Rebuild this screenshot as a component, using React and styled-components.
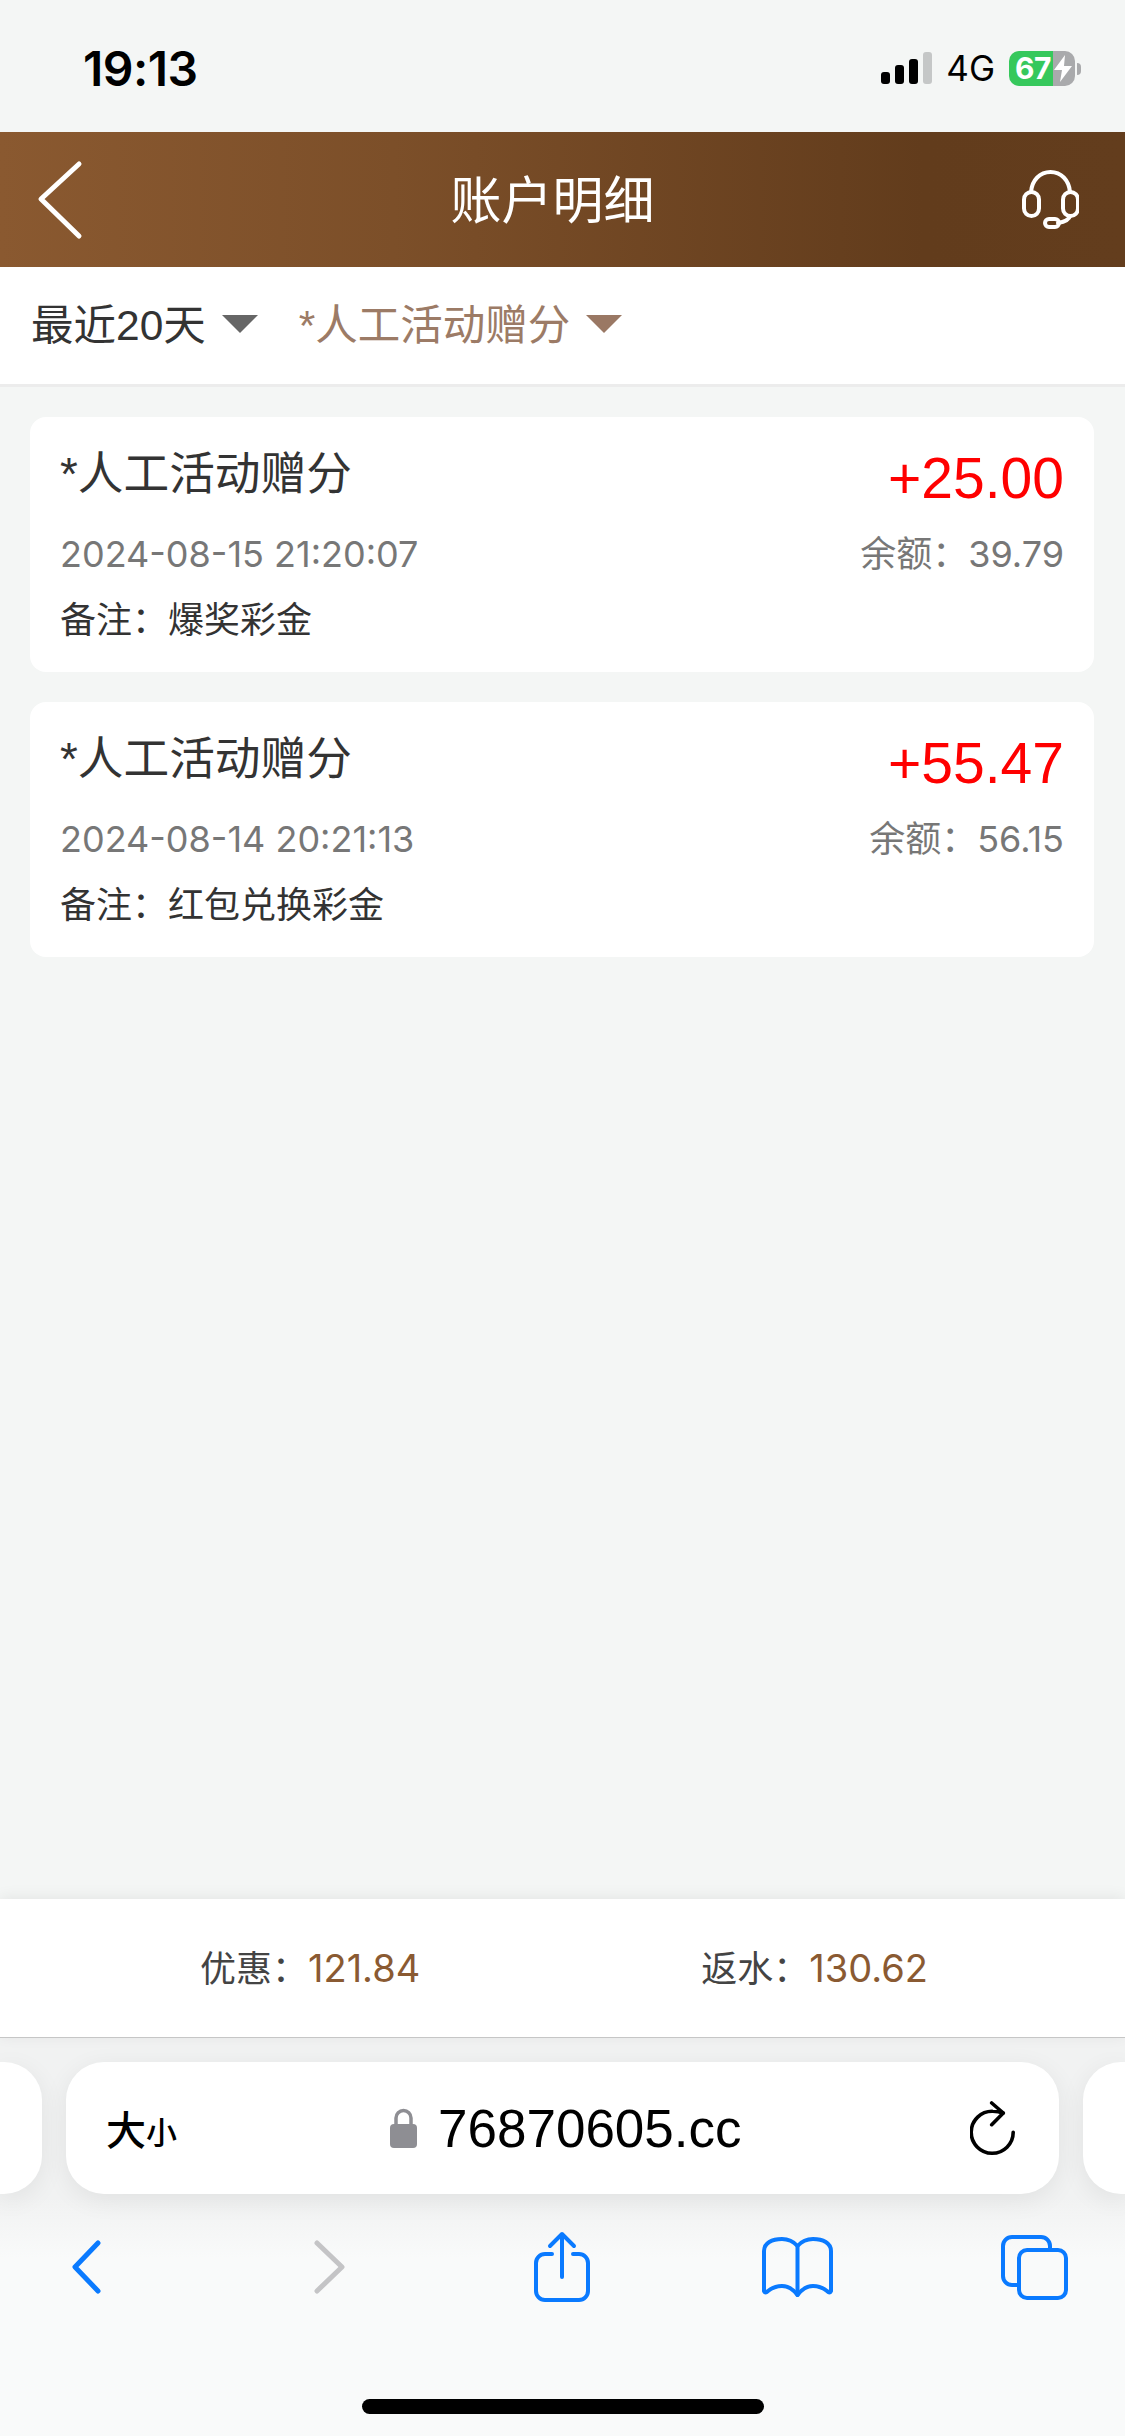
import React from 'react'
import styled, { createGlobalStyle } from 'styled-components'

const cjk = '"Noto Sans CJK SC", sans-serif'

const GlobalStyle = createGlobalStyle`
  html, body {
    margin: 0;
    padding: 0;
    background: #f4f6f5;
  }
  * { box-sizing: border-box; }
`

const Page = styled.div`
  width: 1125px;
  height: 2436px;
  display: flex;
  flex-direction: column;
  overflow: hidden;
  background: #f4f6f5;
  font-family: "Liberation Sans", ${cjk};
`

/* status bar */
const StatusBar = styled.div`
  height: 132px;
  flex: none;
  display: flex;
  align-items: center;
  justify-content: space-between;
  padding: 4px 50px 0 83px;
`
const Clock = styled.div`
  font-family: Inter, sans-serif;
  font-size: 48px;
  font-weight: 600;
  letter-spacing: -0.5px;
  color: #000;
`
const StatusRight = styled.div`
  display: flex;
  align-items: center;
`
const Network = styled.div`
  font-family: Inter, sans-serif;
  font-size: 35px;
  font-weight: 400;
  color: #000;
  margin: 0 14px 0 14px;
`
const Battery = styled.div`
  position: relative;
  width: 66px;
  height: 35px;
  border-radius: 10px;
  background: linear-gradient(90deg, #36c85c 0, #36c85c 44px, #a9aaac 44px, #a9aaac 100%);
  display: flex;
  align-items: center;
  padding-left: 6px;
  color: #fff;
  font-family: Inter, sans-serif;
  font-weight: 700;
  font-size: 30px;
  letter-spacing: -0.5px;
  &::after {
    content: '';
    position: absolute;
    left: 68px;
    top: 12px;
    width: 4px;
    height: 12px;
    border-radius: 0 4px 4px 0;
    background: #a9aaac;
  }
`
const Bolt = styled.svg`
  position: absolute;
  left: 44px;
  top: 4px;
`

/* header */
const Header = styled.header`
  height: 135px;
  flex: none;
  display: flex;
  align-items: center;
  justify-content: space-between;
  padding: 0 46px 0 37px;
  background: linear-gradient(90deg, #8a5930 0%, #7c4f29 35%, #623c1c 82%, #633d1d 100%);
`
const Title = styled.h1`
  margin: 0 0 6px 0;
  font-size: 51px;
  font-weight: 400;
  color: #fff;
  font-family: ${cjk};
`

/* filter bar */
const FilterBar = styled.div`
  height: 120px;
  flex: none;
  display: flex;
  align-items: center;
  padding: 0 0 8px 31px;
  gap: 41px;
  background: #fff;
  border-bottom: 3px solid #ececec;
`
const Filter = styled.div`
  display: flex;
  align-items: center;
  gap: 16px;
  font-size: 42.5px;
  color: ${p => p.$color};
`
const Caret = styled.span`
  width: 0;
  height: 0;
  margin-top: 5px;
  border-left: 18px solid transparent;
  border-right: 18px solid transparent;
  border-top: 18px solid ${p => p.$color};
`

/* records */
const List = styled.main`
  flex: 1;
  display: flex;
  flex-direction: column;
  gap: 30px;
  padding: 30px 31px 0 30px;
`
const Card = styled.article`
  height: 255px;
  flex: none;
  padding: 30px 30px 0 30px;
  background: #fff;
  border-radius: 16px;
`
const Row = styled.div`
  display: flex;
  justify-content: space-between;
  align-items: flex-start;
  margin-top: ${p => p.$top || 0}px;
`
const ItemTitle = styled.div`
  font-size: 45.700px;
  line-height: 56px;
  color: #333;
`
const Amount = styled.div`
  font-size: 57px;
  line-height: 62px;
  color: #ff0000;
`
const Meta = styled.div`
  font-family: Inter, ${cjk};
  font-size: 36px;
  line-height: 50px;
  color: #777;
`
const Note = styled.div`
  font-size: 36px;
  line-height: 52px;
  color: #333;
`

/* summary */
const Summary = styled.div`
  height: 139px;
  flex: none;
  display: flex;
  align-items: center;
  justify-content: center;
  gap: 281px;
  padding: 0 0 4px 3px;
  background: #fff;
  border-bottom: 1px solid #c6c6c6;
  box-shadow: 0 -2px 14px rgba(0, 0, 0, 0.07);
  position: relative;
  font-size: 36px;
  color: #444;
`
const SummaryValue = styled.span`
  font-family: Inter, ${cjk};
  font-size: 38px;
  color: #8a5a32;
`

/* browser chrome */
const Browser = styled.div`
  height: 398px;
  flex: none;
  display: flex;
  flex-direction: column;
  background: linear-gradient(180deg, #f1f2f2 0, #f1f2f2 160px, #f9fafa 220px);
`
const AddressRow = styled.div`
  height: 132px;
  margin-top: 24px;
  display: flex;
  gap: 24px;
`
const SidePill = styled.div`
  flex: none;
  width: ${p => p.$width}px;
  background: #fff;
  border-radius: ${p => (p.$side === 'left' ? '0 38px 38px 0' : '38px 0 0 38px')};
  box-shadow: 0 6px 26px rgba(0, 0, 0, 0.07);
`
const AddressPill = styled.div`
  flex: none;
  width: 993px;
  display: flex;
  align-items: center;
  padding: 0 44px 0 40px;
  background: #fff;
  border-radius: 38px;
  box-shadow: 0 6px 26px rgba(0, 0, 0, 0.07);
  color: #000;
`
const TextSize = styled.div`
  width: 284px;
  font-size: 40px;
  font-weight: 500;
  display: flex;
  align-items: flex-end;
  font-family: ${cjk};
  & > small {
    font-size: 31px;
    font-weight: 500;
    line-height: 52px;
  }
`
const Url = styled.div`
  display: flex;
  align-items: center;
  gap: 21px;
  font-size: 53px;
`
const Reload = styled.svg`
  margin-left: auto;
`
const Toolbar = styled.div`
  display: grid;
  grid-template-columns: 242px 220px 228px 239px auto;
  align-items: center;
  justify-content: start;
  height: 74px;
  margin-top: 36px;
  padding-left: 72px;
`
const HomeRow = styled.div`
  flex: 1;
  display: flex;
  justify-content: center;
  padding-top: 95px;
`
const HomeBar = styled.div`
  width: 402px;
  height: 15px;
  border-radius: 8px;
  background: #000;
`

const records = [
  { amount: '+25.00', time: '2024-08-15 21:20:07', balance: '39.79', note: '爆奖彩金' },
  { amount: '+55.47', time: '2024-08-14 20:21:13', balance: '56.15', note: '红包兑换彩金' },
]

function SignalIcon() {
  return (
    <svg width="51" height="32" viewBox="0 0 51 32">
      <rect x="0" y="20" width="9" height="12" rx="3" fill="#000" />
      <rect x="14" y="13" width="9" height="19" rx="3" fill="#000" />
      <rect x="28" y="7" width="9" height="25" rx="3" fill="#000" />
      <rect x="42" y="0" width="9" height="32" rx="3" fill="#c5c7c7" />
    </svg>
  )
}

function HeadsetIcon() {
  return (
    <svg width="57" height="59" viewBox="0 0 57 59" fill="none" stroke="#fff" strokeWidth="4" strokeLinecap="round">
      <path d="M9 22C10 10 18 2 28.500 2S47 10 48 22" />
      <rect x="2" y="22" width="15" height="24" rx="7.500" />
      <rect x="41" y="22" width="15" height="24" rx="7.500" />
      <path d="M48 46C47 50 42 52 36 53" />
      <rect x="23" y="49" width="14" height="8" rx="4" />
    </svg>
  )
}

function App() {
  return (
    <Page>
      <GlobalStyle />
      <StatusBar>
        <Clock>19:13</Clock>
        <StatusRight>
          <SignalIcon />
          <Network>4G</Network>
          <Battery>
            67
            <Bolt width="20" height="27" viewBox="0 0 20 27">
              <path d="M12 0L1 15H9L7 27L19 11H11Z" fill="#fff" />
            </Bolt>
          </Battery>
        </StatusRight>
      </StatusBar>

      <Header>
        <svg width="46" height="80" viewBox="0 0 46 80" fill="none" stroke="#fff" strokeWidth="5" strokeLinecap="round" strokeLinejoin="round">
          <path d="M42 4L4 39L42 76" />
        </svg>
        <Title>账户明细</Title>
        <HeadsetIcon />
      </Header>

      <FilterBar>
        <Filter $color="#333">
          最近20天
          <Caret $color="#666" />
        </Filter>
        <Filter $color="#9c7b66">
          *人工活动赠分
          <Caret $color="#9a7864" />
        </Filter>
      </FilterBar>

      <List>
        {records.map(r => (
          <Card key={r.time}>
            <Row>
              <ItemTitle>*人工活动赠分</ItemTitle>
              <Amount>{r.amount}</Amount>
            </Row>
            <Row $top={20}>
              <Meta>{r.time}</Meta>
              <Meta>余额：{r.balance}</Meta>
            </Row>
            <Row $top={16}>
              <Note>备注：{r.note}</Note>
            </Row>
          </Card>
        ))}
      </List>

      <Summary>
        <div>优惠：<SummaryValue>121.84</SummaryValue></div>
        <div>返水：<SummaryValue>130.62</SummaryValue></div>
      </Summary>

      <Browser>
        <AddressRow>
          <SidePill $side="left" $width={42} />
          <AddressPill>
            <TextSize>大<small>小</small></TextSize>
            <Url>
              <svg width="27" height="40" viewBox="0 0 27 40">
                <path d="M6 18V10a7.500 7.500 0 0 1 15 0v8" fill="none" stroke="#8e8e93" strokeWidth="3.500" />
                <rect x="0" y="16" width="27" height="24" rx="4" fill="#8e8e93" />
              </svg>
              76870605.cc
            </Url>
            <Reload width="45" height="55" viewBox="0 0 45 55" fill="none" stroke="#000" strokeWidth="3.600" strokeLinecap="round" strokeLinejoin="round">
              <path d="M33 12C29 10.500 26 10.300 22.700 10.300A21 21 0 1 0 43.200 31.300" />
              <path d="M21.700 2L33.300 12L21.700 23.700" />
            </Reload>
          </AddressPill>
          <SidePill $side="right" $width={43} />
        </AddressRow>

        <Toolbar>
          <svg width="29" height="54" viewBox="0 0 29 54" fill="none" stroke="#0a7aff" strokeWidth="5" strokeLinecap="round" strokeLinejoin="round">
            <path d="M26 3L3 27L26 51" />
          </svg>
          <svg width="31" height="54" viewBox="0 0 31 54" fill="none" stroke="#c4c4c6" strokeWidth="5" strokeLinecap="round" strokeLinejoin="round">
            <path d="M3 3L28 27L3 51" />
          </svg>
          <svg width="56" height="72" viewBox="0 0 56 72" fill="none" stroke="#0a7aff" strokeWidth="4" strokeLinecap="round" strokeLinejoin="round">
            <path d="M18 23H11a9 9 0 0 0-9 9V60a9 9 0 0 0 9 9H45a9 9 0 0 0 9-9V32a9 9 0 0 0-9-9H39" />
            <path d="M28 46V3M16 15L28 3L40 15" />
          </svg>
          <svg width="71" height="60" viewBox="0 0 71 60" fill="none" stroke="#0a7aff" strokeWidth="4" strokeLinecap="round" strokeLinejoin="round">
            <path d="M35.500 9C31 4 26 2 20 2C10 2 2 6 2 14V54C3 56 4 56 6 54C11 50 16 49 20 49C26 49 31 52 35.500 58C40 52 45 49 51 49C55 49 60 50 65 54C67 56 68 56 69 54V14C69 6 61 2 51 2C45 2 40 4 35.500 9Z" />
            <path d="M35.500 9V58" />
          </svg>
          <svg width="67" height="65" viewBox="0 0 67 65" fill="none" stroke="#0a7aff" strokeWidth="4" strokeLinejoin="round">
            <path d="M17 50H11a9 9 0 0 1-9-9V11a9 9 0 0 1 9-9h29a9 9 0 0 1 9 9v4" />
            <rect x="18" y="15" width="47" height="48" rx="8" />
          </svg>
        </Toolbar>

        <HomeRow>
          <HomeBar />
        </HomeRow>
      </Browser>
    </Page>
  )
}

export default App
